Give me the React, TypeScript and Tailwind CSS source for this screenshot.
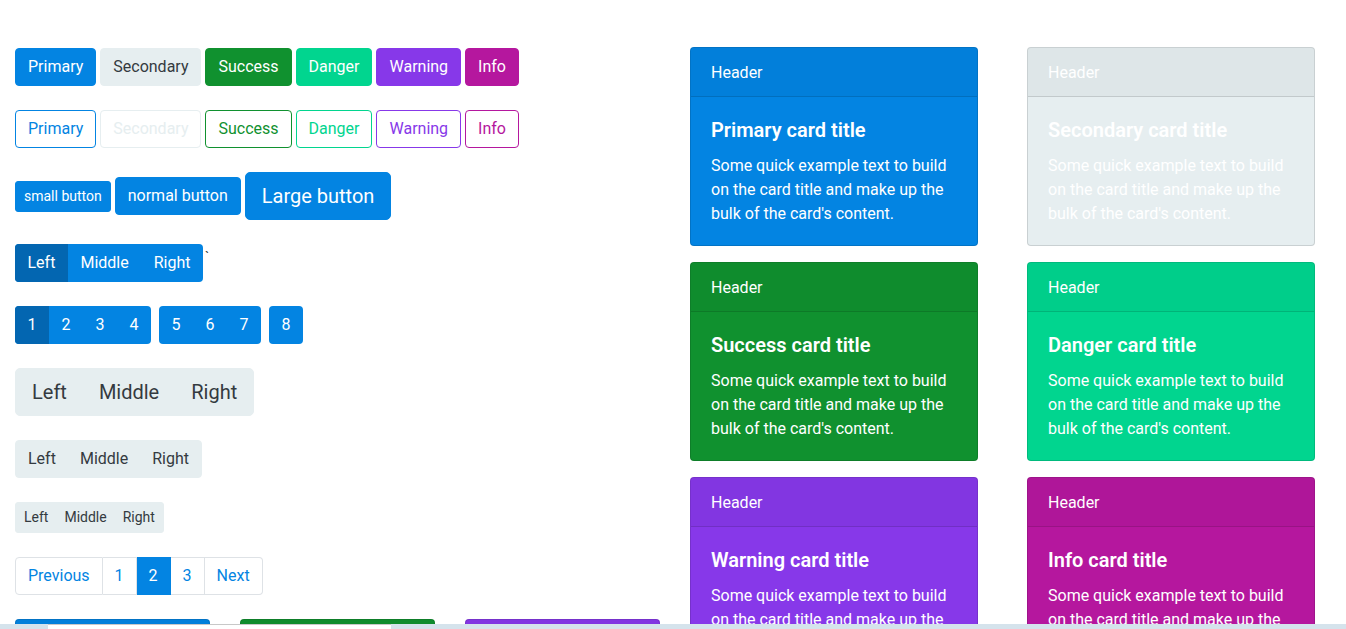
import React from 'react';

type Variant = 'primary' | 'secondary' | 'success' | 'danger' | 'warning' | 'info';

const solid: Record<Variant, string> = {
  primary: 'bg-[#0384e2] border-[#0384e2] text-white',
  secondary: 'bg-[#e6eef0] border-[#e6eef0] text-[#343a40]',
  success: 'bg-[#10912f] border-[#10912f] text-white',
  danger: 'bg-[#01d58f] border-[#01d58f] text-white',
  warning: 'bg-[#8738e9] border-[#8738e9] text-white',
  info: 'bg-[#b5179e] border-[#b5179e] text-white',
};

const outline: Record<Variant, string> = {
  primary: 'border-[#0384e2] text-[#0384e2]',
  secondary: 'border-[#e6eef0] text-[#e6eef0]',
  success: 'border-[#10912f] text-[#10912f]',
  danger: 'border-[#01d58f] text-[#01d58f]',
  warning: 'border-[#8738e9] text-[#8738e9]',
  info: 'border-[#b5179e] text-[#b5179e]',
};

const labels: [Variant, string][] = [
  ['primary', 'Primary'],
  ['secondary', 'Secondary'],
  ['success', 'Success'],
  ['danger', 'Danger'],
  ['warning', 'Warning'],
  ['info', 'Info'],
];

const cardBg: Record<Variant, string> = {
  primary: 'bg-[#0384e2]',
  secondary: 'bg-[#e6eef0]',
  success: 'bg-[#10912f]',
  danger: 'bg-[#01d58f]',
  warning: 'bg-[#8738e9]',
  info: 'bg-[#b5179e]',
};

const Card: React.FC<{ variant: Variant; title: string; width: string }> = ({ variant, title, width }) => (
  <div className={`${width} ${cardBg[variant]} border border-black/[0.125] rounded-[4px] text-white overflow-hidden`}>
    <div className="bg-black/[0.03] border-b border-black/[0.125] px-5 pt-[13px] pb-[11px] leading-6">Header</div>
    <div className="px-5 pt-[21px] pb-[19px]">
      <h4 className="text-[20px] font-semibold leading-6 mb-3">{title}</h4>
      <p className="leading-6">Some quick example text to build on the card title and make up the bulk of the card's content.</p>
    </div>
  </div>
);

const GroupSecondary: React.FC<{ size: 'lg' | 'md' | 'sm' }> = ({ size }) => {
  const btn =
    size === 'lg'
      ? 'px-4 py-2 text-[20px] leading-[30px]'
      : size === 'md'
      ? 'px-3 py-1.5 text-base leading-6'
      : 'px-2 py-1 text-sm leading-[21px]';
  const radius = size === 'lg' ? 'rounded-[5px]' : size === 'md' ? 'rounded-[4px]' : 'rounded-[3px]';
  return (
    <div className={`inline-flex ${radius} overflow-hidden bg-[#e6eef0] text-[#343a40] border border-[#e6eef0]`}>
      <span className={btn}>Left</span>
      <span className={btn}>Middle</span>
      <span className={btn}>Right</span>
    </div>
  );
};

export default function App() {
  const btn = 'border px-3 py-1.5 text-base leading-6 rounded-[4px]';
  const numBtn = 'px-[11.5px] py-1.5 leading-6 border border-transparent';

  return (
    <div className="min-h-screen bg-white text-[#343a40] font-['Roboto',sans-serif]">
      <div className="flex">
        <div className="w-[673px] px-[15px] pt-[48px] flex flex-col gap-6 items-start">
          <div className="flex gap-1">
            {labels.map(([v, l]) => (
              <button key={v} className={`${btn} ${solid[v]}`}>{l}</button>
            ))}
          </div>

          <div className="flex gap-1">
            {labels.map(([v, l]) => (
              <button key={v} className={`${btn} bg-white ${outline[v]}`}>{l}</button>
            ))}
          </div>

          <div className="flex items-center gap-1">
            <button className="bg-[#0384e2] border border-[#0384e2] text-white px-2 py-1 text-sm leading-[21px] rounded-[3px]">small button</button>
            <button className={`${btn} ${solid.primary}`}>normal button</button>
            <button className="bg-[#0384e2] border border-[#0384e2] text-white px-4 py-2 text-[20px] leading-[30px] rounded-[5px]">Large button</button>
          </div>

          <div className="flex items-start">
            <div className="inline-flex rounded-[4px] overflow-hidden bg-[#0384e2] text-white">
              <span className={`${numBtn} bg-[#0366b1]`}>Left</span>
              <span className={numBtn}>Middle</span>
              <span className={numBtn}>Right</span>
            </div>
            <span className="ml-0.5 mt-[6px] text-sm leading-none text-[#343a40]">`</span>
          </div>

          <div className="flex gap-2">
            <div className="inline-flex rounded-[4px] overflow-hidden bg-[#0384e2] text-white">
              <span className={`${numBtn} bg-[#0366b1]`}>1</span>
              <span className={numBtn}>2</span>
              <span className={numBtn}>3</span>
              <span className={numBtn}>4</span>
            </div>
            <div className="inline-flex rounded-[4px] overflow-hidden bg-[#0384e2] text-white">
              <span className={numBtn}>5</span>
              <span className={numBtn}>6</span>
              <span className={numBtn}>7</span>
            </div>
            <div className="inline-flex rounded-[4px] overflow-hidden bg-[#0384e2] text-white">
              <span className={numBtn}>8</span>
            </div>
          </div>

          <GroupSecondary size="lg" />
          <GroupSecondary size="md" />
          <GroupSecondary size="sm" />

          <nav className="flex text-[#0384e2] leading-5">
            <a className="px-3 py-2 border border-[#dee2e6] rounded-l-[4px]">Previous</a>
            <a className="px-3 py-2 border border-l-0 border-[#dee2e6]">1</a>
            <a className="px-3 py-2 border border-l-0 border-[#0384e2] bg-[#0384e2] text-white">2</a>
            <a className="px-3 py-2 border border-l-0 border-[#dee2e6]">3</a>
            <a className="px-3 py-2 border border-l-0 border-[#dee2e6] rounded-r-[4px]">Next</a>
          </nav>

          <div className="flex gap-[30px]">
            <Card variant="primary" title="Primary card title" width="w-[195px]" />
            <Card variant="success" title="Success card title" width="w-[195px]" />
            <Card variant="warning" title="Warning card title" width="w-[195px]" />
          </div>
        </div>

        <div className="pt-[47px] pl-[17px]">
          <div className="grid grid-cols-[288px_288px] gap-x-[49px] gap-y-4">
            <Card variant="primary" title="Primary card title" width="w-[288px]" />
            <Card variant="secondary" title="Secondary card title" width="w-[288px]" />
            <Card variant="success" title="Success card title" width="w-[288px]" />
            <Card variant="danger" title="Danger card title" width="w-[288px]" />
            <Card variant="warning" title="Warning card title" width="w-[288px]" />
            <Card variant="info" title="Info card title" width="w-[288px]" />
          </div>
        </div>
      </div>

      <div className="fixed bottom-0 left-0 right-0 h-[5px] bg-[#d5e3ec] flex">
        <div className="ml-[48px] w-[343px] bg-white border-t border-[#c8c8c8]" />
      </div>
    </div>
  );
}
